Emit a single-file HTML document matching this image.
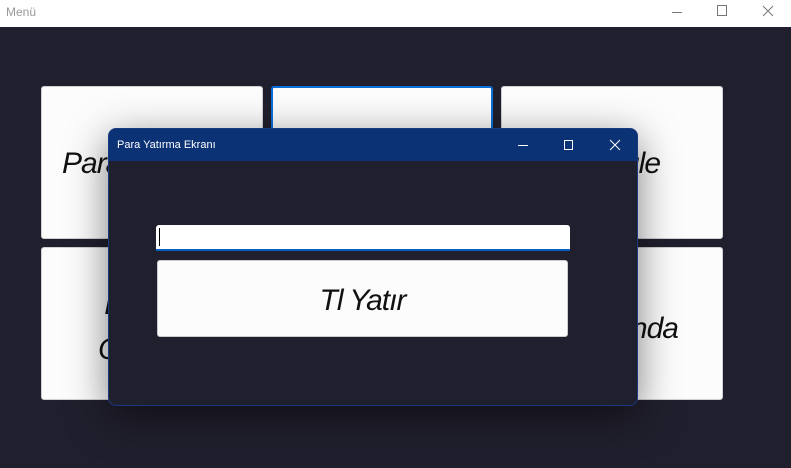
<!DOCTYPE html>
<html><head><meta charset="utf-8"><style>
*{margin:0;padding:0;box-sizing:border-box}
body{width:791px;height:468px;overflow:hidden;background:#201f2d;font-family:"Liberation Sans",sans-serif;position:relative}
.tb{position:absolute;left:0;top:0;width:791px;height:27px;background:#fff}
.tb .t{position:absolute;left:6px;top:5px;font-size:12px;color:#999}
.card{position:absolute;background:#fcfcfc;border:1px solid #d0d0d0;border-radius:3px;overflow:hidden}
.ct{position:absolute;font-style:italic;font-size:30px;color:#111;white-space:nowrap;font-weight:300;letter-spacing:-1px}
.dlg{position:absolute;left:108px;top:128px;width:530px;height:278px;background:#201f2d;border:1px solid #1a3a80;border-radius:8px;overflow:hidden;box-shadow:0 10px 40px rgba(0,0,0,.5)}
.dt{height:32px;background:#0c3276;position:relative}
.dt span{position:absolute;left:8px;top:10px;color:#fff;font-size:11px}
.inp{position:absolute;left:47px;top:96px;width:414px;height:26px;background:#fff;border-radius:3px 3px 0 0;border-bottom:2px solid #0a5fc2}
.inp i{position:absolute;left:3px;top:3px;width:1px;height:18px;background:#000}
.btn{position:absolute;left:48px;top:131px;width:411px;height:77px;background:#fcfcfc;border:1px solid #ccc;border-radius:3px;text-align:center;line-height:80px;font-style:italic;font-size:30px;color:#111;letter-spacing:-1px}
</style></head><body>
<div class="tb"><span class="t">Menü</span>
<svg style="position:absolute;left:0;top:0" width="791" height="27"><g stroke="#777" stroke-width="1" fill="none"><line x1="672" y1="12.5" x2="682" y2="12.5"/><rect x="717.5" y="5.5" width="9" height="10"/><path d="M763 6 L773 16 M773 6 L763 16"/></g></svg></div>
<div class="card" style="left:41px;top:86px;width:222px;height:153px"><span class="ct" style="left:20px;top:60px">Para Yatır</span></div>
<div class="card" style="left:271px;top:86px;width:222px;height:153px;border:2px solid #0a6fd8"></div>
<div class="card" style="left:501px;top:86px;width:222px;height:153px"><span class="ct" style="right:62px;top:60px">Sorgule</span></div>
<div class="card" style="left:41px;top:247px;width:222px;height:153px"><span class="ct" style="left:62px;top:40px">I</span><span class="ct" style="left:56px;top:85px">C</span></div>
<div class="card" style="left:501px;top:247px;width:222px;height:153px"><span class="ct" style="right:44px;top:64px">Ekranda</span></div>
<div class="dlg"><div class="dt"><span>Para Yatırma Ekranı</span>
<svg style="position:absolute;left:0;top:0" width="530" height="32"><g stroke="#fff" stroke-width="1" fill="none"><line x1="409" y1="16.5" x2="419" y2="16.5"/><rect x="455.5" y="11.5" width="8" height="9" /><path d="M501 11 L511 21 M511 11 L501 21"/></g></svg></div>
<div class="inp"><i></i></div>
<div class="btn">Tl Yatır</div></div>
</body></html>
